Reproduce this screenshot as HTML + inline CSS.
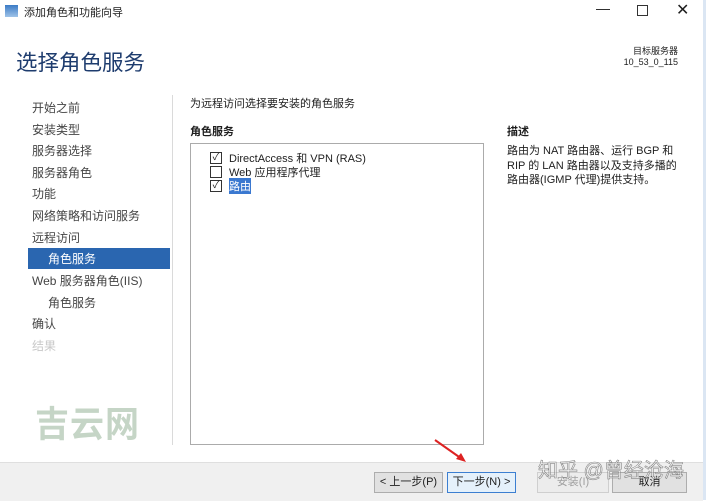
<!DOCTYPE html>
<html><head><meta charset="utf-8"><style>
body{margin:0;width:706px;height:500px;overflow:hidden;background:#fff;font-family:"Liberation Sans","Microsoft YaHei","Noto Sans CJK SC",sans-serif;color:#1e1e1e;position:relative}
.a{position:absolute;white-space:nowrap}
.nav{font-size:12px;color:#444}
.btn{position:absolute;top:472px;height:19px;border:1px solid #adadad;background:#e1e1e1;font-size:11px;text-align:center;line-height:19px}
.cb{position:absolute;width:10px;height:10px;border:1px solid #333;background:#fff;font-size:10px;line-height:10px;text-align:center}
</style></head><body>
<div class="a" style="left:5px;top:5px;width:13px;height:12px;background:linear-gradient(#3b7bc6,#9fc3e8)"></div>
<div class="a" style="left:24px;top:4px;font-size:11px">添加角色和功能向导</div>
<div class="a" style="left:596px;top:0;font-size:14px">—</div>
<div class="a" style="left:637px;top:5px;width:9px;height:9px;border:1px solid #333"></div>
<div class="a" style="left:676px;top:0;font-size:16px;font-weight:300">✕</div>
<div class="a" style="left:703px;top:0;width:3px;height:500px;background:#dbe6f3"></div>
<div class="a" style="left:16px;top:46px;font-size:21.5px;color:#1e3c6e">选择角色服务</div>
<div class="a" style="left:600px;top:46px;width:78px;text-align:right;font-size:9px;line-height:11px">目标服务器<br>10_53_0_115</div>
<div class="a nav" style="left:32px;top:99px">开始之前</div>
<div class="a nav" style="left:32px;top:121px">安装类型</div>
<div class="a nav" style="left:32px;top:142px">服务器选择</div>
<div class="a nav" style="left:32px;top:164px">服务器角色</div>
<div class="a nav" style="left:32px;top:185px">功能</div>
<div class="a nav" style="left:32px;top:207px">网络策略和访问服务</div>
<div class="a nav" style="left:32px;top:229px">远程访问</div>
<div class="a" style="left:28px;top:248px;width:142px;height:21px;background:#2a66b0"></div>
<div class="a nav" style="left:48px;top:250px;color:#fff">角色服务</div>
<div class="a nav" style="left:32px;top:272px">Web 服务器角色(IIS)</div>
<div class="a nav" style="left:48px;top:294px">角色服务</div>
<div class="a nav" style="left:32px;top:315px">确认</div>
<div class="a nav" style="left:32px;top:337px;color:#c8c8c8">结果</div>
<div class="a" style="left:172px;top:95px;width:1px;height:350px;background:#dadada"></div>
<div class="a" style="left:35px;top:397px;font-size:34px;font-weight:bold;color:#c5d5c6;letter-spacing:1px;transform:scaleY(1.05)">吉云网</div>
<div class="a" style="left:190px;top:95px;font-size:11px">为远程访问选择要安装的角色服务</div>
<div class="a" style="left:190px;top:123px;font-size:11px;font-weight:bold">角色服务</div>
<div class="a" style="left:190px;top:143px;width:292px;height:300px;border:1px solid #ababab"></div>
<div class="cb" style="left:210px;top:152px">✓</div>
<div class="a" style="left:229px;top:150px;font-size:11px">DirectAccess 和 VPN (RAS)</div>
<div class="cb" style="left:210px;top:166px"></div>
<div class="a" style="left:229px;top:164px;font-size:11px">Web 应用程序代理</div>
<div class="cb" style="left:210px;top:180px">✓</div>
<div class="a" style="left:229px;top:178px;font-size:11px;background:#3a78d0;color:#fff">路由</div>
<div class="a" style="left:507px;top:123px;font-size:11px;font-weight:bold">描述</div>
<div class="a" style="left:507px;top:144px;font-size:11px;line-height:14.5px">路由为 NAT 路由器、运行 BGP 和<br>RIP 的 LAN 路由器以及支持多播的<br>路由器(IGMP 代理)提供支持。</div>
<div class="a" style="left:0;top:462px;width:703px;height:38px;background:#f0f0f0;border-top:1px solid #dfdfdf"></div>
<div class="btn" style="left:374px;width:67px">&lt; 上一步(P)</div>
<div class="btn" style="left:447px;width:67px;border-color:#3c7fd1;background:#e5f1fb">下一步(N) &gt;</div>
<div class="btn" style="left:537px;width:70px;color:#a0a0a0;background:#ececec;border-color:#cfcfcf">安装(I)</div>
<div class="btn" style="left:612px;width:73px">取消</div>
<svg class="a" style="left:430px;top:436px" width="40" height="30"><line x1="5" y1="4" x2="32" y2="23" stroke="#d22" stroke-width="2"/><polygon points="36,26 26,23 31,17" fill="#d22"/></svg>
<div class="a" style="left:538px;top:454px;font-size:20px;color:rgba(255,255,255,.4);-webkit-text-stroke:0.6px #888">知乎 @曾经沧海</div>
</body></html>
